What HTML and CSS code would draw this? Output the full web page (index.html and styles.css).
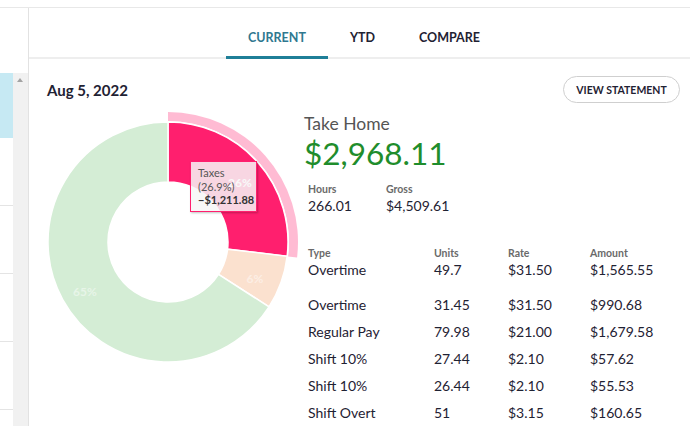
FILE: index.html
```html
<!doctype html>
<html lang="en-US">
<head>
<meta charset="utf-8" />
<meta name="viewport" content="width=device-width" />
<title>Pay Statement</title>
<link rel="stylesheet" href="styles.css">
</head>
<body>
<div class="topline"></div>
<div class="app">
	<!-- left list of statements, mostly cut off -->
	<aside class="sidebar">
		<div class="side-list">
			<div class="side-item active"></div>
			<div class="side-item"></div>
			<div class="side-item"></div>
			<div class="side-item"></div>
			<div class="side-item"></div>
		</div>
		<div class="scrollbar"><span class="arrow"></span></div>
	</aside>

	<main class="main">
		<nav class="tabs">
			<a class="tab current">CURRENT</a>
			<a class="tab">YTD</a>
			<a class="tab">COMPARE</a>
		</nav>

		<section class="panel">
			<div class="date-row">
				<h2 class="date">Aug 5, 2022</h2>
				<button class="stmt">VIEW STATEMENT</button>
			</div>

			<div class="summary">
				<div class="chart">
					<svg width="270" height="270" viewBox="0 0 270 270">
						<path class="halo" d="M135 5 A130 130 0 0 1 264.07 150.48 L255.14 149.41 A121 121 0 0 0 135 14 Z" />
						<path class="slice taxes" d="M135 15 A120 120 0 0 1 254.15 149.29 L194.57 142.15 A60 60 0 0 0 135 75 Z" />
						<path class="slice deduct" d="M254.15 149.29 A120 120 0 0 1 235.98 199.83 L185.49 167.41 A60 60 0 0 0 194.57 142.15 Z" />
						<path class="slice net" d="M235.98 199.83 A120 120 0 1 1 135 15 L135 75 A60 60 0 1 0 185.49 167.41 Z" />
						<text class="pct" x="207" y="80">26%</text>
						<text class="pct soft" x="222" y="176">6%</text>
						<text class="pct soft" x="52" y="189">65%</text>
					</svg>
					<div class="tooltip">
						<div>Taxes</div>
						<div>(26.9%)</div>
						<div class="tip-amt">&minus;$1,211.88</div>
					</div>
				</div>

				<div class="info">
					<div class="take-label">Take Home</div>
					<div class="take-amount">$2,968.11</div>
					<div class="stats">
						<div class="stat">
							<div class="small-label">Hours</div>
							<div class="stat-value">266.01</div>
						</div>
						<div class="stat">
							<div class="small-label">Gross</div>
							<div class="stat-value">$4,509.61</div>
						</div>
					</div>

					<div class="earnings">
						<div class="small-label">Type</div>
						<div class="small-label">Units</div>
						<div class="small-label">Rate</div>
						<div class="small-label">Amount</div>

						<div class="cell first">Overtime</div>
						<div class="cell first">49.7</div>
						<div class="cell first">$31.50</div>
						<div class="cell first">$1,565.55</div>

						<div class="cell">Overtime</div>
						<div class="cell">31.45</div>
						<div class="cell">$31.50</div>
						<div class="cell">$990.68</div>

						<div class="cell">Regular Pay</div>
						<div class="cell">79.98</div>
						<div class="cell">$21.00</div>
						<div class="cell">$1,679.58</div>

						<div class="cell">Shift 10%</div>
						<div class="cell">27.44</div>
						<div class="cell">$2.10</div>
						<div class="cell">$57.62</div>

						<div class="cell">Shift 10%</div>
						<div class="cell">26.44</div>
						<div class="cell">$2.10</div>
						<div class="cell">$55.53</div>

						<div class="cell">Shift Overt</div>
						<div class="cell">51</div>
						<div class="cell">$3.15</div>
						<div class="cell">$160.65</div>
					</div>
				</div>
			</div>
		</section>
	</main>
</div>
</body>
</html>
```

FILE: styles.css
```css
html, body {
	margin: 0;
	height: 426px;
	overflow: hidden;
	background-color: #ffffff;
	font-family: Lato, "Open Sans", sans-serif;
	color: #1f2233;
}
.topline {
	height: 7px;
	border-bottom: 1px solid #e8e8e8;
}
.app {
	display: flex;
	height: 418px;
}

/* sidebar */
.sidebar {
	width: 28px;
	border-right: 1px solid #e2e2e2;
	padding-top: 65px;
	display: flex;
	box-sizing: content-box;
}
.side-list {
	width: 13px;
}
.side-item {
	height: 67px;
	border-bottom: 1px solid #e4e4e4;
}
.side-item.active {
	height: 65px;
	background-color: #c6e9f3;
	border-bottom: none;
}
.scrollbar {
	width: 15px;
	background-color: #f1f1f1;
	position: relative;
}
.arrow {
	position: absolute;
	left: 4px;
	top: 5px;
	border-left: 3.5px solid transparent;
	border-right: 3.5px solid transparent;
	border-bottom: 4px solid #a3a3a3;
}

/* tabs */
.main {
	flex: 1;
}
.tabs {
	height: 49px;
	border-bottom: 2px solid #eeeeee;
	display: flex;
	justify-content: center;
	padding-left: 9px;
}
.tab {
	padding: 0 22px;
	font-size: 12.5px;
	font-weight: bold;
	line-height: 59px;
	height: 49px;
	box-sizing: border-box;
	color: #1f2233;
}
.tab.current {
	color: #2f7890;
	border-bottom: 3px solid #1f7f98;
	height: 51px;
}

/* panel */
.panel {
	padding: 17px 10px 0 4px;
}
.date-row {
	display: flex;
	justify-content: space-between;
	align-items: center;
	padding-left: 14px;
}
.date {
	margin: 0;
	font-size: 15px;
	font-weight: bold;
}
.stmt {
	width: 117px;
	height: 27px;
	border: 1px solid #cfcfcf;
	border-radius: 14px;
	background: #ffffff;
	font-family: Lato, sans-serif;
	font-size: 10.5px;
	font-weight: bold;
	color: #1f2233;
	padding: 0;
}
.summary {
	display: flex;
	margin-top: 4px;
}
.chart {
	position: relative;
	width: 270px;
	height: 270px;
}
.chart svg {
	display: block;
}
.slice {
	stroke: #ffffff;
	stroke-width: 1.5;
}
.taxes { fill: #ff1f6e; }
.deduct { fill: #fbe1cf; }
.net { fill: #d4edd5; }
.halo { fill: #ff1f6e; opacity: 0.3; }
.pct {
	fill: #ffffff;
	font-size: 12px;
	font-weight: bold;
	text-anchor: middle;
}
.pct.soft {
	opacity: 0.45;
}
.tooltip {
	position: absolute;
	left: 157px;
	top: 54px;
	width: 58px;
	padding: 4px 0 4px 7px;
	background-color: rgba(247, 247, 247, 0.85);
	border: 1px solid #ff1f6e;
	box-shadow: 1px 1px 2px rgba(0, 0, 0, 0.25);
	font-size: 11px;
	line-height: 13.5px;
	color: #555555;
}
.tip-amt {
	font-weight: bold;
	color: #333333;
}

/* right side */
.info {
	margin-left: 1px;
	padding-top: 6px;
}
.take-label {
	font-size: 17.5px;
	color: #555555;
	line-height: 22px;
}
.take-amount {
	font-size: 31.5px;
	color: #1f8d2c;
	line-height: 36px;
}
.stats {
	display: flex;
	padding-left: 4px;
	margin-top: 11px;
}
.stat {
	width: 78px;
}
.small-label {
	font-size: 10.5px;
	font-weight: bold;
	color: #6a6a6a;
	line-height: 14px;
}
.stat-value {
	font-size: 14px;
	line-height: 20px;
}
.earnings {
	display: grid;
	grid-template-columns: 126px 74px 82px auto;
	padding-left: 4px;
	margin-top: 30px;
}
.cell {
	font-size: 14px;
	line-height: 27px;
}
.cell.first {
	line-height: 19px;
	padding-bottom: 12px;
}
```
